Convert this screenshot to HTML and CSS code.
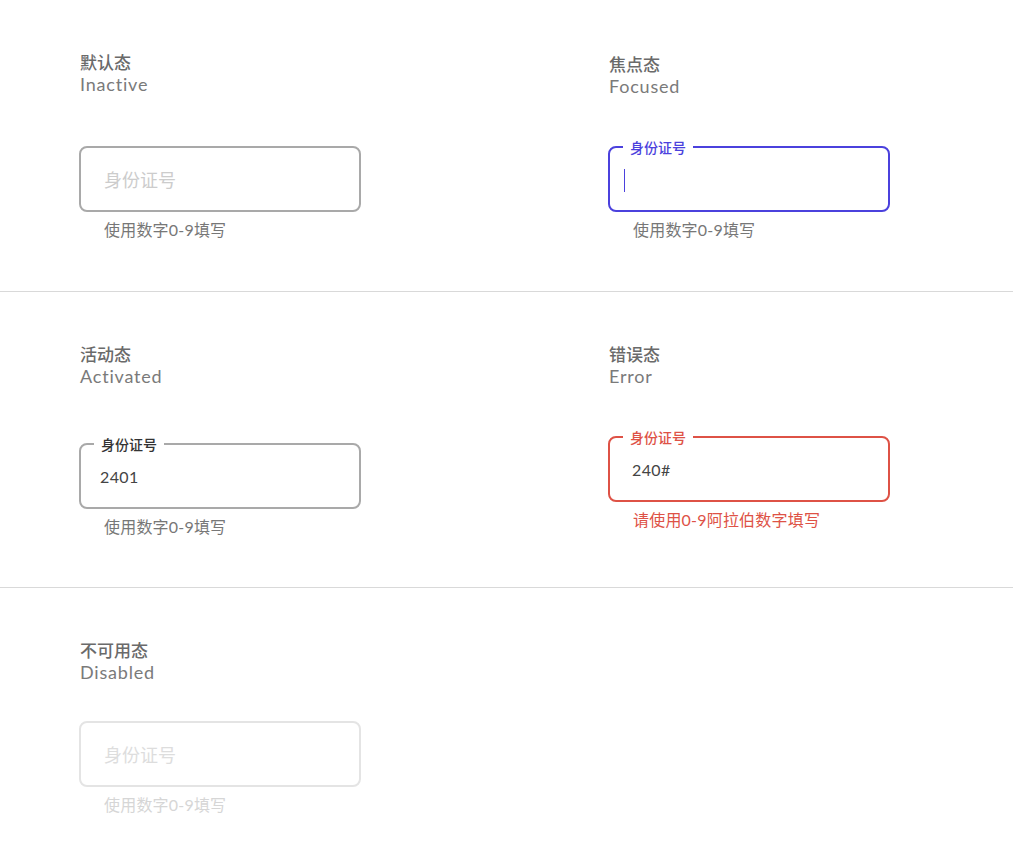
FILE: index.html
```html
<!DOCTYPE html>
<html lang="zh-CN">
<head>
<meta charset="utf-8">
<title>输入框状态</title>
<link rel="stylesheet" href="styles.css">
</head>
<body>
  <section class="row row-first">
    <div class="cell">
      <div class="state-cn">默认态</div>
      <div class="state-en">Inactive</div>
      <div class="field field-inactive gap-51">
        <span class="placeholder">身份证号</span>
      </div>
      <div class="helper">使用数字0-9填写</div>
    </div>
    <div class="cell cell-shift">
      <div class="state-cn">焦点态</div>
      <div class="state-en">Focused</div>
      <div class="field field-focused gap-49">
        <span class="float-label">身份证号</span>
        <span class="caret"></span>
      </div>
      <div class="helper">使用数字0-9填写</div>
    </div>
  </section>

  <section class="row row-second">
    <div class="cell">
      <div class="state-cn">活动态</div>
      <div class="state-en">Activated</div>
      <div class="field field-activated gap-56">
        <span class="float-label">身份证号</span>
        <span class="value">2401</span>
      </div>
      <div class="helper">使用数字0-9填写</div>
    </div>
    <div class="cell">
      <div class="state-cn">错误态</div>
      <div class="state-en">Error</div>
      <div class="field field-error gap-49">
        <span class="float-label">身份证号</span>
        <span class="value value-error">240#</span>
      </div>
      <div class="helper helper-error">请使用0-9阿拉伯数字填写</div>
    </div>
  </section>

  <section class="row row-last">
    <div class="cell">
      <div class="state-cn">不可用态</div>
      <div class="state-en">Disabled</div>
      <div class="field field-disabled gap-38">
        <span class="placeholder placeholder-disabled">身份证号</span>
      </div>
      <div class="helper helper-disabled">使用数字0-9填写</div>
    </div>
  </section>
</body>
</html>
```

FILE: styles.css
```css
* {
  box-sizing: border-box;
}

html,
body {
  margin: 0;
  padding: 0;
  background: #ffffff;
}

body {
  width: 1013px;
  font-family: "Lato", "Noto Sans CJK SC", sans-serif;
  color: #777777;
}

/* one band of states, split into two columns */
.row {
  display: grid;
  grid-template-columns: 529px 1fr;
  align-items: start;
  padding-left: 80px;
  border-bottom: 1px solid #d9d9d9;
}

.row-first {
  height: 292px;
}

.row-second {
  height: 296px;
}

.row-last {
  border-bottom: none;
}

.cell {
  display: flex;
  flex-direction: column;
  align-items: flex-start;
  padding-top: 51px;
}

.cell-shift {
  padding-top: 53px;
}

.state-cn {
  font-family: "Noto Sans CJK SC", sans-serif;
  font-size: 17px;
  line-height: 22px;
  font-weight: 500;
  color: #6a6a6a;
}

.state-en {
  font-size: 18px;
  line-height: 22px;
  color: #7a7a7a;
  letter-spacing: 0.8px;
}

.gap-38 { margin-top: 38px; }
.gap-49 { margin-top: 49px; }
.gap-51 { margin-top: 51px; }
.gap-56 { margin-top: 56px; }

/* text field box */
.field {
  position: relative;
  width: 282px;
  height: 66px;
  margin-left: -1px;
  border: 2px solid #a9a9a9;
  border-radius: 8px;
  display: flex;
  align-items: center;
  background: #ffffff;
}

.field-focused {
  border-color: #4b41dd;
}

.field-error {
  border-color: #de5246;
}

.field-disabled {
  border-color: #e4e4e4;
}

.placeholder {
  padding-left: 23px;
  font-family: "Noto Sans CJK SC", sans-serif;
  font-size: 18px;
  color: #cccccc;
}

.placeholder-disabled {
  color: #dddddd;
}

.value {
  padding-left: 19px;
  font-size: 16px;
  color: #444444;
  letter-spacing: 0.4px;
}

.value-error {
  padding-left: 22px;
}

.caret {
  display: block;
  width: 1px;
  height: 23px;
  margin-left: 14px;
  margin-top: 3px;
  background: #4b41dd;
}

/* label sitting on the top border */
.float-label {
  position: absolute;
  top: -10px;
  left: 13px;
  padding: 0 7px;
  background: #ffffff;
  font-family: "Noto Sans CJK SC", sans-serif;
  font-size: 14px;
  line-height: 18px;
  font-weight: 500;
  color: #333333;
}

.field-focused .float-label {
  color: #4b41dd;
}

.field-error .float-label {
  color: #de5246;
}

.helper {
  margin-top: 7px;
  padding-left: 24px;
  font-family: "Lato", "Noto Sans CJK SC", sans-serif;
  font-size: 16px;
  line-height: 22px;
  color: #777777;
  letter-spacing: 0.2px;
}

.helper-error {
  color: #de5246;
}

.helper-disabled {
  color: #d6d6d6;
}
```
